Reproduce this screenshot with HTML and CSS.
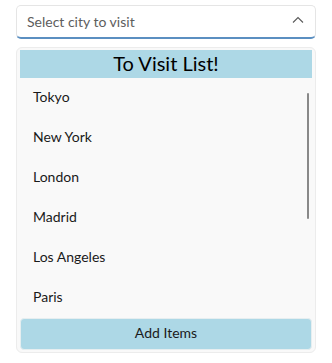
FILE: index.html
```html
<!DOCTYPE html>
<html>
<head>
<meta charset="utf-8">
<link rel="stylesheet" href="styles.css">
</head>
<body>
<div class="app">
  <div class="combo">
    <span class="placeholder">Select city to visit</span>
    <svg class="chev" width="12" height="8" viewBox="0 0 12 8"><path d="M1 6.5 L6 1.5 L11 6.5" fill="none" stroke="#5a5a5a" stroke-width="1.1"/></svg>
  </div>
  <div class="panel">
    <div class="header">To Visit List!</div>
    <div class="list">
      <div class="item">Tokyo</div>
      <div class="item">New York</div>
      <div class="item">London</div>
      <div class="item">Madrid</div>
      <div class="item">Los Angeles</div>
      <div class="item">Paris</div>
      <div class="scrollbar"></div>
    </div>
    <div class="btn">Add Items</div>
  </div>
</div>
</body>
</html>
```
FILE: styles.css
```css
html, body { margin: 0; padding: 0; background: #ffffff; }
body { font-family: "Lato", "Open Sans", sans-serif; color: #1a1a1a; }
.app { width: 332px; height: 363px; padding: 5px 16px 0 16px; box-sizing: border-box; display: flex; flex-direction: column; }
.combo {
  height: 34px; box-sizing: border-box; border: 1px solid #e5e5e5; border-bottom: 2px solid #5b8fc1;
  border-radius: 5px; display: flex; align-items: center; justify-content: space-between;
  padding: 0 10px 1px 10px; background: #fff;
}
.placeholder { font-size: 14px; color: #5d5d5d; }
.chev { margin-right: 1px; margin-top: -2px; }
.panel {
  margin-top: 8px; border: 1px solid #ececec; border-radius: 6px; background: #f9f9f9;
  padding: 2px 2px 2px 2px; display: flex; flex-direction: column; height: 306px; box-sizing: border-box;
}
.header { background: #add8e6; height: 28px; box-sizing: border-box; padding-bottom: 2px; font-size: 20px; color: #000; display: flex; align-items: center; justify-content: center; margin: 0 1px; }
.list { position: relative; flex: 1; display: flex; flex-direction: column; }
.item { height: 40px; box-sizing: border-box; padding-bottom: 3px; display: flex; align-items: center; padding-left: 14px; font-size: 14px; color: #1a1a1a; }
.scrollbar { position: absolute; left: 288px; top: 15px; width: 2px; height: 126px; background: #898989; border-radius: 1px; }
.btn { background: #add8e6; height: 32px; border-radius: 4px; border: 1px solid #e6eef0; box-sizing: border-box; padding-bottom: 3px; display: flex; align-items: center; justify-content: center; font-size: 14px; color: #1a1a1a; margin: 0 1px; }
```
